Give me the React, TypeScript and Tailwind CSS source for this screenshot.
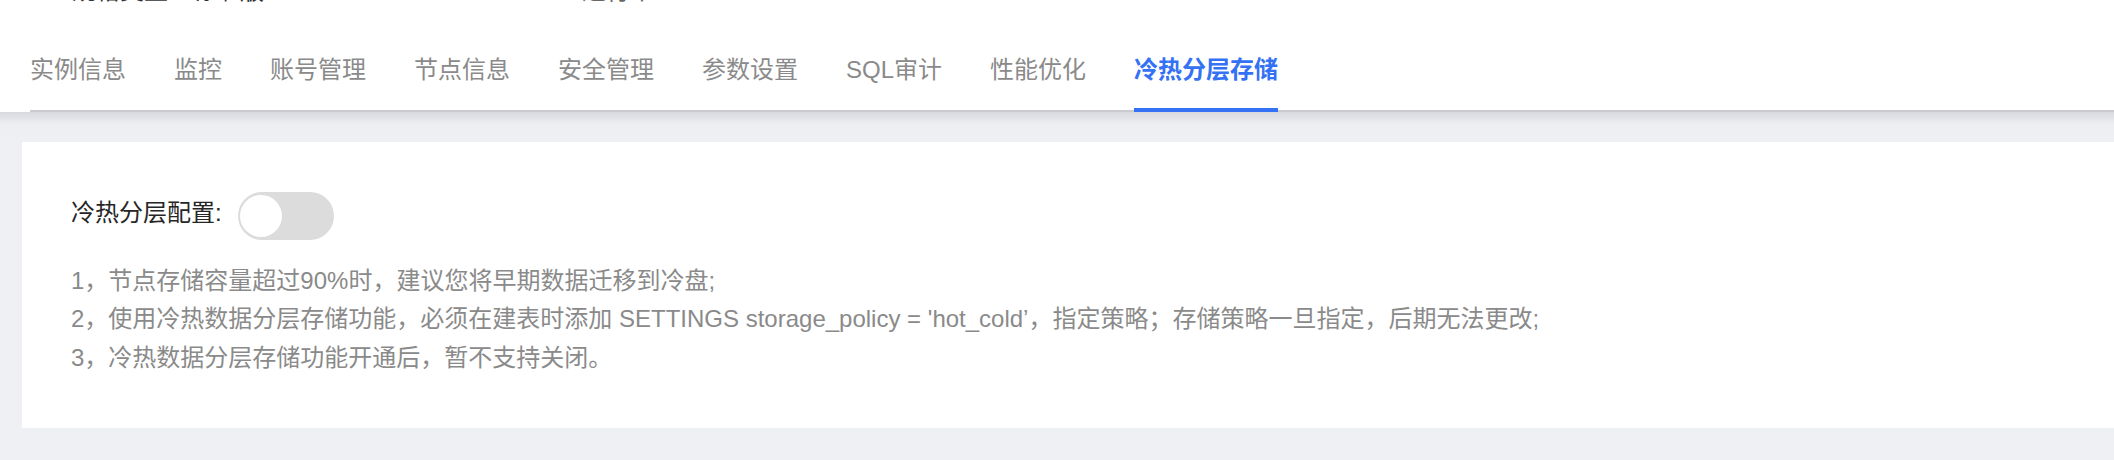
import { useState } from 'react';

const tabs = ['实例信息', '监控', '账号管理', '节点信息', '安全管理', '参数设置', 'SQL审计', '性能优化', '冷热分层存储'];

const tips = [
  '1，节点存储容量超过90%时，建议您将早期数据迁移到冷盘;',
  "2，使用冷热数据分层存储功能，必须在建表时添加 SETTINGS storage_policy = 'hot_cold’，指定策略；存储策略一旦指定，后期无法更改;",
  '3，冷热数据分层存储功能开通后，暂不支持关闭。',
];

export default function App() {
  const [active, setActive] = useState('冷热分层存储');
  const [enabled, setEnabled] = useState(false);

  return (
    <div className="min-h-[460px] bg-[#eef0f4] font-['Liberation_Sans','Noto_Sans_CJK_SC',sans-serif] text-[24px]">
      <div className="bg-white">
        {/* previous section, scrolled almost out of view */}
        <div className="h-[40px] overflow-hidden">
          <div className="-mt-[25px] flex leading-[32px]">
            <span className="ml-[72px] w-[510px] text-[#333]">规格类型：标准版</span>
            <span className="text-[#666]">运行中</span>
          </div>
        </div>

        <div className="pl-[30px]">
          <div className="flex items-start gap-[48px] border-b-2 border-[#cbccd0]">
            {tabs.map((tab) => {
              const isActive = tab === active;
              return (
                <div
                  key={tab}
                  onClick={() => setActive(tab)}
                  className={`relative pt-[12px] pb-[22px] leading-[36px] cursor-pointer ${
                    isActive ? 'font-semibold text-[#3471f4]' : 'text-[#8a8a8a]'
                  }`}
                >
                  {tab}
                  {isActive && <span className="absolute left-0 right-0 -bottom-[2px] h-[4px] bg-[#3471f4]" />}
                </div>
              );
            })}
          </div>
        </div>
      </div>

      <div className="h-[30px] bg-linear-to-b from-[#d8d9de] via-[#eceef2] via-40% to-[#eef0f4]" />

      <div className="ml-[22px] bg-white pl-[49px] pt-[50px] pb-[51px]">
        <div className="flex h-[48px] items-center">
          <span className="mb-[6px] leading-[36px] text-[#262626]">冷热分层配置:</span>
          <button
            onClick={() => setEnabled(!enabled)}
            className={`relative ml-4 h-[48px] w-[96px] rounded-full transition-colors ${
              enabled ? 'bg-[#3471f4]' : 'bg-[#dcdcdc]'
            }`}
          >
            <span
              className={`absolute top-[3px] h-[42px] w-[42px] rounded-full bg-white transition-all ${
                enabled ? 'left-[51px]' : 'left-[2px]'
              }`}
            />
          </button>
        </div>

        <div className="mt-[22px] leading-[38.4px] text-[#8a8a8a]">
          {tips.map((tip) => (
            <p key={tip}>{tip}</p>
          ))}
        </div>
      </div>
    </div>
  );
}
